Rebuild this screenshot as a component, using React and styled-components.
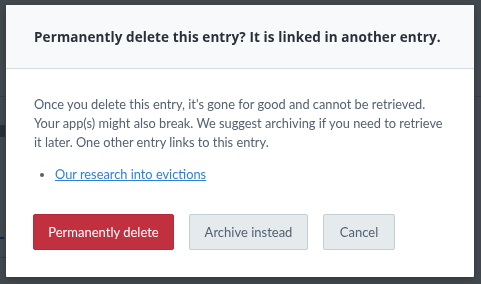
import React from 'react';
import styled, { createGlobalStyle } from 'styled-components';

const GlobalStyle = createGlobalStyle`
  html, body {
    margin: 0;
    padding: 0;
    width: 481px;
    height: 284px;
    overflow: hidden;
    font-family: "Open Sans", "Noto Sans", sans-serif;
  }
  * { box-sizing: border-box; }
`;

const Page = styled.div`
  width: 481px;
  height: 284px;
  background: #ffffff;
  padding-top: 96px;
  display: flex;
  flex-direction: column;
`;

const PageRule = styled.div`
  height: 1px;
  background: #d3dce0;
`;

const PageMark = styled.div`
  width: ${p => p.$w}px;
  height: ${p => p.$h}px;
  margin-top: ${p => p.$top}px;
  background: ${p => p.$color};
`;

const Overlay = styled.div`
  position: fixed;
  inset: 0;
  background: rgba(12, 20, 28, 0.78);
  display: flex;
  align-items: flex-start;
  padding: 5px 0 0 6px;
`;

const Modal = styled.div`
  width: 468px;
  height: 272px;
  background: #ffffff;
  border-radius: 1px;
  box-shadow: 0 2px 6px rgba(0, 0, 0, 0.25);
  display: flex;
  flex-direction: column;
`;

const Header = styled.div`
  height: 64px;
  background: #f7f9fa;
  border-bottom: 1px solid #d3dce0;
  display: flex;
  align-items: center;
  padding: 0 28px;
`;

const Title = styled.h2`
  margin: 0;
  font-size: 13.5px;
  font-weight: 700;
  color: #2a3039;
  letter-spacing: 0.1px;
`;

const Body = styled.div`
  padding: 26px 28px 0;
  color: #536171;
  font-family: Lato, "Open Sans", sans-serif;
  font-size: 12.8px;
  line-height: 19px;
`;

const Text = styled.p`
  margin: 0;
`;

const List = styled.ul`
  margin: 13px 0 0;
  padding-left: 21px;
  li::marker { color: #536171; }
`;

const Link = styled.a`
  color: #2f7fd8;
  text-decoration: underline;
`;

const Actions = styled.div`
  display: flex;
  gap: 15px;
  padding: 30px 27px 0;
`;

const Button = styled.button`
  height: 36px;
  padding: 0;
  border-radius: 2px;
  font-family: Lato, "Open Sans", sans-serif;
  font-size: 13px;
  white-space: nowrap;
  border: 1px solid ${p => (p.$primary ? '#b8293d' : '#c3cfd5')};
  background: ${p => (p.$primary ? '#c1303f' : '#e5ebed')};
  color: ${p => (p.$primary ? '#ffffff' : '#536171')};
  width: ${p => p.$w}px;
`;

export default function App() {
  return (
    <>
      <GlobalStyle />
      <Page>
        <PageRule />
        <PageMark $w={5} $h={12} $top={28} $color="#8a96a3" />
        <PageMark $w={4} $h={2} $top={100} $color="#1872e0" />
        <PageMark $w={6} $h={1} $top={18} $color="#c3cfd5" />
      </Page>
      <Overlay>
        <Modal>
          <Header>
            <Title>Permanently delete this entry? It is linked in another entry.</Title>
          </Header>
          <Body>
            <Text>
              Once you delete this entry, it's gone for good and cannot be retrieved.
              Your app(s) might also break. We suggest archiving if you need to retrieve
              it later. One other entry links to this entry.
            </Text>
            <List>
              <li><Link href="#">Our research into evictions</Link></li>
            </List>
          </Body>
          <Actions>
            <Button $primary $w={141}>Permanently delete</Button>
            <Button $w={119}>Archive instead</Button>
            <Button $w={72}>Cancel</Button>
          </Actions>
        </Modal>
      </Overlay>
    </>
  );
}
